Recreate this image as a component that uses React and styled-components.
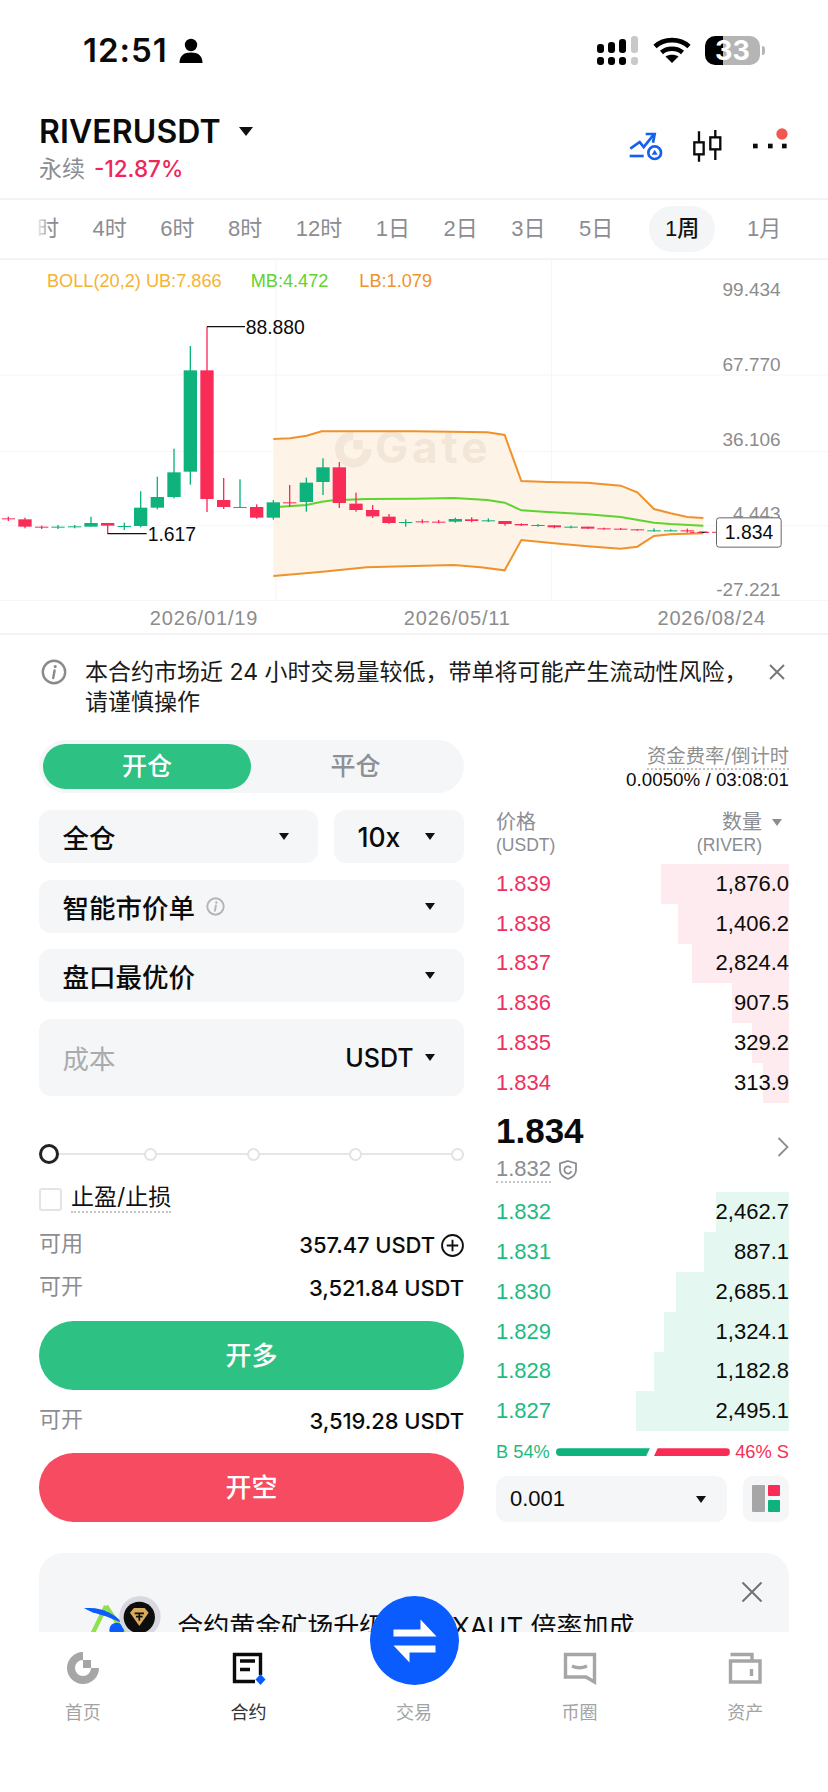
import React from 'react'
import styled, { createGlobalStyle } from 'styled-components'

const NUM = '"Liberation Sans", "Noto Sans CJK SC", sans-serif'

const GlobalStyle = createGlobalStyle`
  html, body { margin: 0; padding: 0; background: #fff; }
  body { font-family: Inter, "Noto Sans CJK SC", sans-serif; color: #0b0b0b; }
  * { box-sizing: border-box; }
`

const Page = styled.div`
  position: relative;
  width: 828px;
  height: 1792px;
  overflow: hidden;
  background: #fff;
`

/* status bar */
const StatusBar = styled.div`
  height: 100px;
  display: flex;
  align-items: center;
  padding: 0 63px 0 83px;
`
const Clock = styled.span`
  font-size: 33px;
  font-weight: 600;
  letter-spacing: 1px;
`
const PersonIcon = styled.svg`
  margin-left: 11px;
`
const StatusIcons = styled.div`
  margin-left: auto;
  display: flex;
  align-items: center;
  gap: 14px;
`
const BatteryWrap = styled.div`
  display: flex;
  align-items: center;
  gap: 2px;
`
const Battery = styled.div`
  width: 55px;
  height: 29px;
  border-radius: 10px;
  background: linear-gradient(90deg, #000 32%, #b5b5b5 32%);
  color: #fff;
  font-size: 27px;
  font-weight: 700;
  line-height: 29px;
  text-align: center;
`
const BatteryNub = styled.div`
  width: 3px;
  height: 9px;
  border-radius: 0 3px 3px 0;
  background: #b5b5b5;
`

/* header */
const Header = styled.div`
  height: 100px;
  display: flex;
  justify-content: space-between;
  padding: 0 38px 0 39px;
  border-bottom: 2px solid #f3f3f4;
`
const TitleRow = styled.div`
  display: flex;
  align-items: center;
  gap: 18px;
  height: 60px;
  padding-top: 2px;
`
const Title = styled.span`
  font-size: 32px;
  font-weight: 600;
  letter-spacing: 0.1px;
`
const Caret = styled.span`
  display: inline-block;
  flex: none;
  width: 0;
  height: 0;
  border-left: ${p => p.$size || 5.5}px solid transparent;
  border-right: ${p => p.$size || 5.5}px solid transparent;
  border-top: ${p => (p.$size || 5.5) + 2}px solid ${p => p.$color || '#111'};
`
const SubRow = styled.div`
  display: flex;
  align-items: center;
  gap: 9px;
  font-size: 23px;
  line-height: 30px;
  margin-top: -6px;
  color: #8b8d92;
`
const Change = styled.span`
  color: #f0265a;
  font-weight: 500;
  font-size: 22.5px;
`
const HeaderIcons = styled.div`
  display: flex;
  gap: 27px;
  padding-top: 27px;
  height: 64px;
`

/* interval tabs */
const TabRow = styled.div`
  position: relative;
  height: 60px;
  display: flex;
  align-items: center;
  padding-left: 8px;
  border-bottom: 2px solid #f3f3f4;
  overflow: hidden;
  font-family: ${NUM};
`
const TabFade = styled.div`
  position: absolute;
  left: 0;
  top: 0;
  bottom: 0;
  width: 50px;
  background: linear-gradient(90deg, #fff 70%, rgba(255, 255, 255, 0));
`
const Tab = styled.div`
  flex: none;
  height: 46px;
  line-height: 46px;
  padding: 0 ${p => (p.$active ? 16 : 16.75)}px;
  margin-left: ${p => (p.$active ? 19 : 0)}px;
  margin-right: ${p => (p.$active ? 15 : 0)}px;
  border-radius: 23px;
  font-size: 22px;
  font-weight: ${p => (p.$active ? 500 : 400)};
  color: ${p => (p.$active ? '#111' : '#8b8d92')};
  background: ${p => (p.$active ? '#f3f5f7' : 'transparent')};
`

/* chart */
const ChartSvg = styled.svg`
  display: block;
  width: 828px;
  height: 375px;
  border-bottom: 2px solid #f3f3f4;
`
const ChartText = styled.text`
  font-family: ${NUM};
  font-size: ${p => p.$size || 57}px;
  fill: ${p => p.$color || '#8c8c8c'};
`
const Watermark = styled(ChartText)`
  font-family: Inter, sans-serif;
  font-weight: 700;
`

/* notice */
const Notice = styled.div`
  position: relative;
  height: 105px;
  padding: 22px 70px 0 85px;
  font-size: 23px;
  line-height: 30px;
  color: #1b1b1b;
`
const NoticeIcon = styled.div`
  position: absolute;
  left: 41px;
  top: 24px;
`
const NoticeClose = styled.svg`
  position: absolute;
  right: 42px;
  top: 28px;
`

/* trade layout */
const TradeGrid = styled.div`
  display: grid;
  grid-template-columns: 425px 293px;
  column-gap: 32px;
  align-items: start;
  padding: 0 39px;
`
const LeftCol = styled.div`
  display: flex;
  flex-direction: column;
`
const RightCol = styled.div`
  display: flex;
  flex-direction: column;
`
const Toggle = styled.div`
  height: 53px;
  border-radius: 27px;
  background: #f5f6f8;
  display: flex;
  padding: 4px;
  margin-bottom: 17px;
`
const ToggleItem = styled.div`
  width: 208px;
  flex: ${p => (p.$active ? 'none' : 1)};
  border-radius: 23px;
  text-align: center;
  line-height: 45px;
  font-size: 25px;
  font-weight: 500;
  color: ${p => (p.$active ? '#fff' : '#8f9094')};
  background: ${p => (p.$active ? '#2dc184' : 'transparent')};
`
const SelectRow = styled.div`
  display: flex;
  gap: 16px;
  margin-bottom: 17px;
`
const Select = styled.div`
  flex: ${p => (p.$fixed ? `0 0 ${p.$fixed}px` : p.$grow ? 1 : 'none')};
  height: ${p => p.$h || 53}px;
  border-radius: 12px;
  background: #f5f6f8;
  display: flex;
  align-items: center;
  padding: 0 29.5px 0 23.5px;
  font-size: 26.5px;
  font-weight: 500;
  margin-bottom: ${p => p.$mb || 0}px;
`
const Push = styled.span`
  margin-left: auto;
  display: flex;
  align-items: center;
`
const SelectInfo = styled.span`
  display: inline-flex;
  margin-left: 11px;
`
const SelectUnit = styled.span`
  font-size: 25px;
  margin-right: 11px;
`
const Placeholder = styled.span`
  color: #a9abaf;
  font-weight: 400;
`
const SliderTrack = styled.div`
  position: relative;
  height: 20px;
  margin: 48px 0 0;
  display: flex;
  align-items: center;
  justify-content: space-between;
  padding-left: 3px;
  &::before {
    content: '';
    position: absolute;
    left: 4px;
    right: 0;
    top: 9px;
    height: 2px;
    background: #e6e6e6;
  }
`
const SliderThumb = styled.div`
  position: relative;
  flex: none;
  width: 20px;
  height: 20px;
  margin: 0 -3.5px;
  border-radius: 50%;
  border: 3.5px solid #222;
  background: #fff;
`
const SliderDot = styled.div`
  position: relative;
  flex: none;
  width: 13px;
  height: 13px;
  border-radius: 50%;
  border: 2px solid #e3e3e3;
  background: #fff;
`
const CheckRow = styled.div`
  display: flex;
  align-items: center;
  gap: 9px;
  margin-top: 23px;
  height: 24px;
`
const CheckBox = styled.div`
  width: 23px;
  height: 23px;
  border: 2px solid #e4e4e4;
  border-radius: 3px;
`
const Dotted = styled.span`
  font-size: ${p => p.$size || 23}px;
  line-height: 1.1;
  color: ${p => p.$color || '#111'};
  border-bottom: 2px dotted #c4c4c4;
`
const InfoRow = styled.div`
  display: flex;
  align-items: center;
  justify-content: space-between;
  height: 30px;
  margin-top: ${p => p.$mt || 0}px;
`
const InfoLabel = styled.span`
  font-size: 22px;
  line-height: 30px;
  margin-top: -5px;
  color: #8b8d92;
`
const InfoValue = styled.span`
  display: flex;
  align-items: center;
  gap: 6px;
  font-size: 22px;
  font-weight: 500;
  letter-spacing: -0.1px;
`
const BigButton = styled.div`
  height: 69px;
  margin-top: ${p => p.$mt}px;
  border-radius: 35px;
  background: ${p => p.$bg};
  color: #fff;
  text-align: center;
  line-height: 69px;
  font-size: 26px;
  font-weight: 500;
`

/* order book */
const Funding = styled.div`
  text-align: right;
  height: 82px;
  padding-top: 6px;
`
const FundingValue = styled.div`
  font-family: ${NUM};
  font-size: 18.8px;
  line-height: 24px;
  margin-top: 1px;
`
const BookHead = styled.div`
  display: flex;
  justify-content: space-between;
  height: 42px;
  padding-right: 7px;
  color: #8b8d92;
`
const HeadCell = styled.div`
  font-size: 20px;
  line-height: 24px;
  text-align: ${p => p.$align || 'left'};
  margin-top: -12px;
`
const HeadSub = styled.div`
  font-family: ${NUM};
  font-size: 17.5px;
  line-height: 23px;
  margin-right: ${p => p.$mr || 0}px;
`
const HeadCaret = styled.span`
  display: inline-flex;
  margin-left: 10px;
  vertical-align: 3px;
`
const BookRow = styled.div`
  position: relative;
  height: 39.8px;
  display: flex;
  align-items: center;
  justify-content: space-between;
  font-family: ${NUM};
  font-size: 22px;
`
const BookBar = styled.div`
  position: absolute;
  right: 0;
  top: 0;
  bottom: 0;
  background: ${p => (p.$side === 'ask' ? '#fdebef' : '#e4f8f1')};
`
const BookPrice = styled.span`
  position: relative;
  color: ${p => (p.$side === 'ask' ? '#f0305f' : '#1dbb82')};
`
const BookQty = styled.span`
  position: relative;
`
const MidPrice = styled.div`
  position: relative;
  height: 89.6px;
  padding-top: 7px;
  font-family: ${NUM};
`
const MidBig = styled.div`
  font-size: 35px;
  line-height: 42px;
  font-weight: 700;
`
const MidSub = styled.div`
  display: flex;
  align-items: center;
  gap: 8px;
  height: 30px;
  margin-top: 3px;
`
const MidChevron = styled.svg`
  position: absolute;
  right: 0;
  top: 33px;
`
const RatioRow = styled.div`
  display: flex;
  align-items: center;
  justify-content: space-between;
  height: 24px;
  margin-top: 9px;
  font-family: ${NUM};
  font-size: 18.3px;
  white-space: nowrap;
`
const RatioText = styled.span`
  flex: none;
  color: ${p => p.$color};
`
const RatioBars = styled.div`
  display: flex;
  flex: 1;
  margin: 0 3px 0 6px;
  height: 8px;
`
const RatioBuy = styled.div`
  width: 94px;
  background: #0db27c;
  border-radius: 4px 0 0 4px;
  clip-path: polygon(0 0, 100% 0, 96% 100%, 0 100%);
`
const RatioSell = styled.div`
  width: 76px;
  margin-left: 4px;
  background: #f92c58;
  border-radius: 0 4px 4px 0;
  clip-path: polygon(5% 0, 100% 0, 100% 100%, 0 100%);
`
const DepthRow = styled.div`
  display: flex;
  gap: 16px;
  margin-top: 12px;
`
const DepthSelect = styled.div`
  flex: 1;
  height: 46px;
  border-radius: 12px;
  background: #f5f6f8;
  display: flex;
  align-items: center;
  justify-content: space-between;
  padding: 0 21px 0 14px;
  font-family: ${NUM};
  font-size: 22px;
`
const LayoutBtn = styled.div`
  width: 46px;
  height: 46px;
  border-radius: 10px;
  background: #f5f6f8;
  display: flex;
  align-items: center;
  justify-content: center;
`

/* promo card, runs under the tab bar */
const Banner = styled.div`
  position: relative;
  margin: 31px 39px 0;
  height: 180px;
  border-radius: 24px;
  background: #f5f6f8;
  padding: 37px 0 0 41px;
  display: flex;
  gap: 14px;
`
const BannerText = styled.div`
  margin-top: 20px;
  font-size: 26px;
  line-height: 34px;
  white-space: nowrap;
`
const BannerClose = styled.svg`
  position: absolute;
  right: 26px;
  top: 28px;
`

/* tab bar */
const NavBar = styled.div`
  position: absolute;
  left: 0;
  right: 0;
  bottom: 0;
  height: 160px;
  background: #fff;
  display: grid;
  grid-template-columns: repeat(5, 1fr);
`
const NavItem = styled.div`
  display: flex;
  flex-direction: column;
  align-items: center;
  padding-top: 18px;
  font-size: 18px;
  color: ${p => (p.$active ? '#333' : '#a3a3a3')};
`
const NavIcon = styled.div`
  height: 36px;
  margin-bottom: 12px;
`
const SwapButton = styled.div`
  position: absolute;
  left: 369.5px;
  top: -36px;
  width: 89px;
  height: 89px;
  border-radius: 50%;
  background: #0a5cff;
  display: flex;
  align-items: center;
  justify-content: center;
`

const GREEN = '#0db27c'
const RED = '#f92c58'

// x, bodyTop, bodyBottom, wickTop, wickBottom, colour. Units: 1/3 px from the chart's top left
const candles = [
  [25, 775, 778, 770, 783, 'r'], [75, 778, 800, 773, 805, 'r'], [125, 800, 803, 797, 807, 'r'],
  [174, 800, 803, 795, 807, 'g'], [224, 799, 802, 795, 805, 'g'], [273, 789, 800, 770, 800, 'g'],
  [323, 789, 797, 789, 822, 'r'], [373, 798, 801, 788, 810, 'g'], [422, 743, 798, 694, 802, 'g'],
  [472, 711, 743, 650, 748, 'g'], [522, 637, 711, 566, 715, 'g'], [571, 331, 635, 258, 674, 'g'],
  [621, 331, 717, 200, 756, 'r'], [671, 720, 741, 654, 747, 'r'], [720, 741, 744, 658, 744, 'g'],
  [770, 741, 773, 733, 776, 'r'], [820, 727, 773, 720, 779, 'g'], [869, 727, 730, 675, 740, 'r'],
  [919, 668, 726, 653, 755, 'g'], [969, 622, 666, 595, 705, 'g'], [1018, 622, 729, 606, 744, 'r'],
  [1068, 731, 750, 698, 755, 'r'], [1118, 750, 769, 735, 774, 'r'], [1167, 770, 789, 762, 791, 'r'],
  [1217, 786, 789, 778, 800, 'g'], [1267, 784, 786, 778, 790, 'r'], [1316, 785, 787, 780, 790, 'r'],
  [1366, 777, 785, 773, 788, 'g'], [1415, 778, 783, 772, 787, 'r'], [1465, 781, 784, 775, 786, 'g'],
  [1515, 783, 792, 783, 797, 'r'], [1564, 792, 796, 790, 798, 'r'], [1614, 795, 798, 792, 800, 'g'],
  [1663, 796, 802, 795, 805, 'r'], [1713, 800, 803, 797, 805, 'g'], [1763, 800, 806, 800, 807, 'r'],
  [1812, 805, 807, 803, 809, 'r'], [1862, 806, 808, 804, 809, 'r'], [1912, 808, 811, 807, 812, 'r'],
  [1962, 811, 814, 805, 815, 'g'], [2012, 811, 813, 808, 814, 'g'], [2062, 811, 814, 806, 818, 'r'],
]

const upper = '820,537 870,535 920,527 965,514 1100,514 1242,514 1462,517 1514,525 1564,663 1642,666 1762,668 1862,677 1912,697 1962,747 2012,760 2062,771 2110,774'
const lower = '820,948 960,936 1100,922 1242,918 1362,915 1442,922 1514,931 1564,840 1662,850 1762,859 1862,866 1912,860 1962,828 2012,823 2110,820'
const middle = '820,742 920,735 965,725 1000,721 1100,717 1242,716 1362,714 1462,720 1514,728 1564,751 1642,756 1762,763 1862,771 1962,788 2012,792 2110,797'
const bandFill = `${upper} ${lower.split(' ').reverse().join(' ')}`

const axisLabels = [
  ['99.434', 90], ['67.770', 313], ['36.106', 540], ['4.443', 762], ['-27.221', 990],
]

const Chart = () => (
  <ChartSvg viewBox="0 0 2484 1119" preserveAspectRatio="none">
    <g stroke="#f5f5f6" strokeWidth="3">
      <line x1="0" x2="2484" y1="345" y2="345" />
      <line x1="0" x2="2484" y1="575" y2="575" />
      <line x1="0" x2="2484" y1="797" y2="797" />
      <line x1="828" x2="828" y1="0" y2="1022" />
      <line x1="1654" x2="1654" y1="0" y2="1022" />
      <line x1="0" x2="2484" y1="1022" y2="1022" />
    </g>
    <polygon points={bandFill} fill="#fdf3e7" />
    <path d="M1060 526 A42 42 0 1 0 1102 568" fill="none" stroke="#b8a58e" strokeOpacity="0.16" strokeWidth="26" />
    <rect x="1060" y="540" width="28" height="28" fill="#b8a58e" fillOpacity="0.16" />
    <Watermark x="1125" y="610" $size={132} $color="rgba(184,165,142,0.18)" letterSpacing="12">Gate</Watermark>
    <polyline points={upper} fill="none" stroke="#f0922b" strokeWidth="6" />
    <polyline points={lower} fill="none" stroke="#f0922b" strokeWidth="6" />
    <polyline points={middle} fill="none" stroke="#5fd32f" strokeWidth="6" />
    {candles.map(([x, top, bottom, wickTop, wickBottom, c]) => (
      <g key={x} fill={c === 'g' ? GREEN : RED}>
        <rect x={x - 2} y={wickTop} width="4" height={wickBottom - wickTop} />
        <rect x={x - 20} y={top} width="40" height={Math.max(bottom - top, 3)} />
      </g>
    ))}
    <rect x="2098" y="815" width="24" height="4" fill="#222" />
    <line x1="2070" x2="2148" y1="817" y2="817" stroke="#f92c58" strokeWidth="3" strokeDasharray="14 8" />
    <ChartText x="141" y="82" $size={54.5} $color="#f5b335">BOLL(20,2) UB:7.866</ChartText>
    <ChartText x="752" y="82" $size={54.5} $color="#5fd32f">MB:4.472</ChartText>
    <ChartText x="1078" y="82" $size={54.5} $color="#f0922b">LB:1.079</ChartText>
    <path d="M621 200 H735" fill="none" stroke="#111" strokeWidth="4" />
    <ChartText x="737" y="221" $size={58} $color="#0b0b0b">88.880</ChartText>
    <path d="M323 821 H440" fill="none" stroke="#111" strokeWidth="4" />
    <ChartText x="443" y="842" $size={58} $color="#0b0b0b">1.617</ChartText>
    {axisLabels.map(([label, y]) => (
      <ChartText key={label} x="2342" y={y + 19} textAnchor="end">{label}</ChartText>
    ))}
    <rect x="2149.5" y="773.5" width="194" height="88" rx="8" fill="#fff" stroke="#666" strokeWidth="3" />
    <ChartText x="2247" y="838" textAnchor="middle" $size={58} $color="#0b0b0b">1.834</ChartText>
    <ChartText x="612" y="1094" textAnchor="middle" $size={60} letterSpacing="2.5">2026/01/19</ChartText>
    <ChartText x="1372" y="1094" textAnchor="middle" $size={60} letterSpacing="2.5">2026/05/11</ChartText>
    <ChartText x="2135" y="1094" textAnchor="middle" $size={60} letterSpacing="2.5">2026/08/24</ChartText>
  </ChartSvg>
)

const Info = ({ size, color, width }) => (
  <svg width={size} height={size} viewBox="0 0 26 26" fill="none" stroke={color} strokeLinecap="round">
    <circle cx="13" cy="13" r="11.2" strokeWidth={width} />
    <path d="M13.6 11.5 L12.2 19" strokeWidth={width} />
    <path d="M14.2 7.4 L14.2 7.6" strokeWidth={width + 0.6} />
  </svg>
)

const asks = [
  ['1.839', '1,876.0', 128], ['1.838', '1,406.2', 111], ['1.837', '2,824.4', 97],
  ['1.836', '907.5', 57], ['1.835', '329.2', 37], ['1.834', '313.9', 26],
]
const bids = [
  ['1.832', '2,462.7', 73], ['1.831', '887.1', 85], ['1.830', '2,685.1', 113],
  ['1.829', '1,324.1', 125], ['1.828', '1,182.8', 135], ['1.827', '2,495.1', 153],
]

const BookRows = ({ rows, side }) =>
  rows.map(([price, qty, depth]) => (
    <BookRow key={price}>
      <BookBar $side={side} style={{ width: depth }} />
      <BookPrice $side={side}>{price}</BookPrice>
      <BookQty>{qty}</BookQty>
    </BookRow>
  ))

const App = () => (
  <Page>
    <GlobalStyle />
    <StatusBar>
      <Clock>12:51</Clock>
      <PersonIcon width="24" height="25" viewBox="0 0 24 25">
        <circle cx="12" cy="7" r="6.2" fill="#000" />
        <path d="M0.5 25 C0.5 17.5 5 14.5 12 14.5 C19 14.5 23.5 17.5 23.5 25 Z" fill="#000" />
      </PersonIcon>
      <StatusIcons>
        <svg width="43" height="29" viewBox="0 0 43 29">
          <rect x="1" y="8" width="7" height="9" rx="3" />
          <rect x="12" y="6" width="7" height="11" rx="3" />
          <rect x="23" y="3" width="7" height="14" rx="3" />
          <rect x="35" y="0" width="7" height="17" rx="3" fill="#c9c9c9" />
          <rect x="1" y="21" width="7" height="8" rx="3" />
          <rect x="12" y="21" width="7" height="8" rx="3" />
          <rect x="23" y="21" width="7" height="8" rx="3" />
          <rect x="35" y="21" width="7" height="8" rx="3" fill="#c9c9c9" />
        </svg>
        <svg width="38" height="26" viewBox="0 0 38 26" fill="none" stroke="#000" strokeWidth="4.6">
          <path d="M2 9.5 C11 1 27 1 36 9.5" />
          <path d="M8.5 15.5 C14 10.5 24 10.5 29.5 15.5" />
          <path d="M19 26 L12.5 19.5 C16 17 22 17 25.5 19.5 Z" fill="#000" stroke="none" />
        </svg>
        <BatteryWrap>
          <Battery>33</Battery>
          <BatteryNub />
        </BatteryWrap>
      </StatusIcons>
    </StatusBar>

    <Header>
      <div>
        <TitleRow>
          <Title>RIVERUSDT</Title>
          <Caret $size={7} />
        </TitleRow>
        <SubRow>
          <span>永续</span>
          <Change>-12.87%</Change>
        </SubRow>
      </div>
      <HeaderIcons>
        <svg width="36.7" height="36.7" viewBox="25 35 110 110" fill="none" stroke="#1460f0" strokeWidth="8">
          <path d="M32 100 L60 80 L72 95 L102 58" />
          <path d="M78 56 H105 L100 82" />
          <path d="M30 122 H72" />
          <circle cx="105" cy="112" r="19" />
          <path d="M105 103 L114 118 H96 Z" fill="#1460f0" stroke="none" />
        </svg>
        <svg width="33.3" height="36.7" viewBox="215 35 100 110" fill="none" stroke="#0b0b0b" strokeWidth="7">
          <rect x="225" y="81" width="28" height="36" />
          <rect x="273" y="66" width="30" height="36" />
          <path d="M239 48 V81 M239 117 V139 M288 44 V66 M288 102 V134" />
        </svg>
        <svg width="38.3" height="36.7" viewBox="395 35 115 110">
          <rect x="398" y="85" width="14" height="14" fill="#0b0b0b" />
          <rect x="443" y="85" width="14" height="14" fill="#0b0b0b" />
          <rect x="485" y="85" width="14" height="14" fill="#0b0b0b" />
          <circle cx="485" cy="56" r="17" fill="#f4574f" />
        </svg>
      </HeaderIcons>
    </Header>

    <TabRow>
      {['2时', '4时', '6时', '8时', '12时', '1日', '2日', '3日', '5日'].map(t => <Tab key={t}>{t}</Tab>)}
      <Tab $active>1周</Tab>
      <Tab>1月</Tab>
      <TabFade />
    </TabRow>

    <Chart />

    <Notice>
      <NoticeIcon><Info size={26} color="#8a8a8a" width={2.4} /></NoticeIcon>
      本合约市场近 24 小时交易量较低，带单将可能产生流动性风险，请谨慎操作
      <NoticeClose width="18" height="18" viewBox="0 0 18 18" stroke="#77797d" strokeWidth="2" fill="none">
        <path d="M2 2 L16 16 M16 2 L2 16" />
      </NoticeClose>
    </Notice>

    <TradeGrid>
      <LeftCol>
        <Toggle>
          <ToggleItem $active>开仓</ToggleItem>
          <ToggleItem>平仓</ToggleItem>
        </Toggle>
        <SelectRow>
          <Select $grow>全仓<Push><Caret /></Push></Select>
          <Select $fixed={130}>10x<Push><Caret /></Push></Select>
        </SelectRow>
        <Select $mb={16}>
          智能市价单
          <SelectInfo><Info size={19} color="#b4b4b4" width={2.6} /></SelectInfo>
          <Push><Caret /></Push>
        </Select>
        <Select $mb={17}>盘口最优价<Push><Caret /></Push></Select>
        <Select $h={77}>
          <Placeholder>成本</Placeholder>
          <Push>
            <SelectUnit>USDT</SelectUnit>
            <Caret />
          </Push>
        </Select>

        <SliderTrack>
          <SliderThumb />
          <SliderDot />
          <SliderDot />
          <SliderDot />
          <SliderDot />
        </SliderTrack>
        <CheckRow>
          <CheckBox />
          <Dotted>止盈/止损</Dotted>
        </CheckRow>
        <InfoRow $mt={19}>
          <InfoLabel>可用</InfoLabel>
          <InfoValue>
            357.47 USDT
            <svg width="23" height="23" viewBox="0 0 22 22" fill="none" stroke="#111" strokeWidth="1.8">
              <circle cx="11" cy="11" r="10" />
              <path d="M11 5.5 V16.5 M5.5 11 H16.5" />
            </svg>
          </InfoValue>
        </InfoRow>
        <InfoRow $mt={13}>
          <InfoLabel>可开</InfoLabel>
          <InfoValue>3,521.84 USDT</InfoValue>
        </InfoRow>
        <BigButton $bg="#2dc184" $mt={18}>开多</BigButton>
        <InfoRow $mt={16}>
          <InfoLabel>可开</InfoLabel>
          <InfoValue>3,519.28 USDT</InfoValue>
        </InfoRow>
        <BigButton $bg="#f64b60" $mt={17}>开空</BigButton>
      </LeftCol>

      <RightCol>
        <Funding>
          <Dotted $size={19.3} $color="#8f8f8f">资金费率/倒计时</Dotted>
          <FundingValue>0.0050% / 03:08:01</FundingValue>
        </Funding>
        <BookHead>
          <HeadCell>
            价格
            <HeadSub>(USDT)</HeadSub>
          </HeadCell>
          <HeadCell $align="right">
            数量
            <HeadCaret><Caret $size={5} $color="#8b8d92" /></HeadCaret>
            <HeadSub $mr={20}>(RIVER)</HeadSub>
          </HeadCell>
        </BookHead>
        <BookRows rows={asks} side="ask" />
        <MidPrice>
          <MidBig>1.834</MidBig>
          <MidSub>
            <Dotted $size={22} $color="#8b8d92">1.832</Dotted>
            <svg width="18" height="20" viewBox="0 0 18 20" fill="none" stroke="#8b8d92" strokeWidth="1.8">
              <path d="M9 1 L17 3.5 V10 C17 15 13 17.5 9 19 C5 17.5 1 15 1 10 V3.5 Z" />
              <path d="M12 8 A3.6 3.6 0 1 0 12.4 11" />
            </svg>
          </MidSub>
          <MidChevron width="12" height="22" viewBox="0 0 12 22" fill="none" stroke="#8b8d92" strokeWidth="1.8">
            <path d="M1.5 2 L10.5 11 L1.5 20" />
          </MidChevron>
        </MidPrice>
        <BookRows rows={bids} side="bid" />
        <RatioRow>
          <RatioText $color="#1dbb82">B 54%</RatioText>
          <RatioBars>
            <RatioBuy />
            <RatioSell />
          </RatioBars>
          <RatioText $color="#f92c58">46% S</RatioText>
        </RatioRow>
        <DepthRow>
          <DepthSelect>0.001<Caret /></DepthSelect>
          <LayoutBtn>
            <svg width="28" height="28" viewBox="0 0 28 28">
              <rect x="0" y="0" width="13" height="27" rx="1" fill="#a6a6a6" />
              <rect x="16" y="0" width="12" height="11" rx="1" fill="#f92c58" />
              <rect x="16" y="15" width="12" height="12" rx="1" fill="#0db27c" />
            </svg>
          </LayoutBtn>
        </DepthRow>
      </RightCol>
    </TradeGrid>

    <Banner>
      <svg width="83.3" height="50" viewBox="60 30 250 150">
        <path d="M138 78 L98 160 M138 78 L200 170" stroke="#8fe04a" strokeWidth="13" fill="none" />
        <path d="M72 85 C120 78 165 100 188 130 C150 112 120 102 100 98 Z" fill="#0a5cff" />
        <circle cx="170" cy="150" r="22" fill="#0a5cff" />
        <circle cx="240" cy="110" r="62" fill="#d8d9e0" />
        <circle cx="238" cy="112" r="47" fill="#0d0d0d" />
        <path d="M210 98 L222 84 H254 L266 98 L238 138 Z" fill="#d8ab5e" />
        <path d="M224 100 H252 M238 100 V122 M228 110 H248" stroke="#0d0d0d" strokeWidth="5" fill="none" />
      </svg>
      <BannerText>合约黄金矿场升级 新增 XAUT 倍率加成</BannerText>
      <BannerClose width="22" height="22" viewBox="0 0 22 22" stroke="#6f7176" strokeWidth="2" fill="none">
        <path d="M1.5 1.5 L20.5 20.5 M20.5 1.5 L1.5 20.5" />
      </BannerClose>
    </Banner>

    <NavBar>
      <NavItem>
        <NavIcon>
          <svg width="36" height="36" viewBox="0 0 36 36" fill="none">
            <path d="M18 6 A12 12 0 1 0 30 18" stroke="#a6a6a6" strokeWidth="8" />
            <rect x="18" y="10" width="8" height="8" fill="#a6a6a6" />
          </svg>
        </NavIcon>
        首页
      </NavItem>
      <NavItem $active>
        <NavIcon>
          <svg width="36" height="36" viewBox="0 0 36 36" fill="none">
            <path d="M30.5 25 V4.5 H4.5 V31.5 H25" stroke="#0b0b0b" strokeWidth="3.4" />
            <path d="M10 11 H25 M10 19.5 H20" stroke="#0b0b0b" strokeWidth="3.4" />
            <path d="M30.5 24 L35.5 29.5 L30.5 35 L25.5 29.5 Z" fill="#0a5cff" />
          </svg>
        </NavIcon>
        合约
      </NavItem>
      <NavItem>
        <NavIcon />
        交易
      </NavItem>
      <NavItem>
        <NavIcon>
          <svg width="36" height="36" viewBox="0 0 36 36" fill="none" stroke="#a6a6a6" strokeWidth="3.4">
            <path d="M3.5 4.5 H32.5 V32 L24 27 H3.5 Z" />
            <path d="M10 16 Q17.5 19.5 25 16" />
          </svg>
        </NavIcon>
        币圈
      </NavItem>
      <NavItem>
        <NavIcon>
          <svg width="36" height="36" viewBox="0 0 36 36" fill="none" stroke="#a6a6a6" strokeWidth="3.4">
            <path d="M3.5 4.5 H25 V11 M3.5 11 H33 V32 H3.5 Z" />
            <path d="M24.5 19 V26" />
          </svg>
        </NavIcon>
        资产
      </NavItem>
      <SwapButton>
        <svg width="45" height="45" viewBox="-22.5 -22.5 45 45" fill="#fff">
          <path d="M6 -21 L22 -4 H-21 V-11 H6 Z" />
          <path d="M-21 5 H21 V12 H-5 V22 Z" />
        </svg>
      </SwapButton>
    </NavBar>
  </Page>
)

export default App
